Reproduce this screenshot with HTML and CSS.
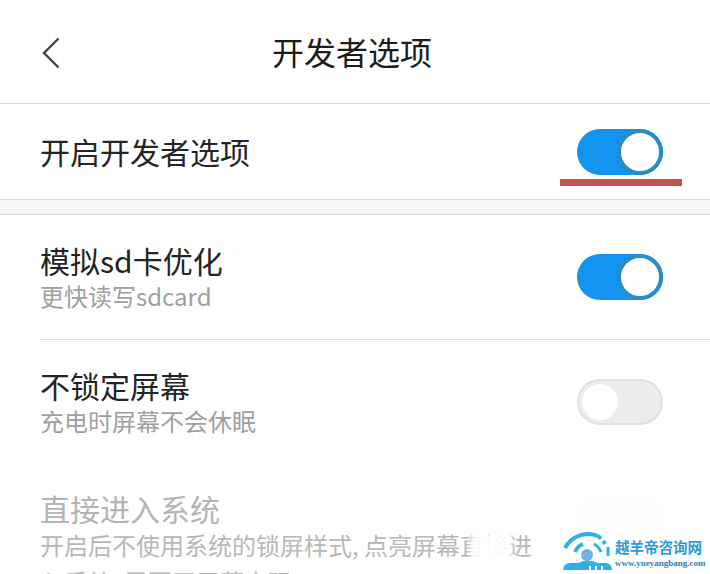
FILE: index.html
```html
<!DOCTYPE html>
<html lang="zh-CN">
<head>
<meta charset="UTF-8">
<meta name="viewport" content="width=device-width, initial-scale=1.0">
<title>开发者选项</title>
<link rel="stylesheet" href="styles.css">
</head>
<body>

<div class="page">
    <div class="header">
        <svg class="back" width="20" height="32" viewBox="0 0 20 32">
            <path d="M17.5 1.5 L3 16 L17.5 30.5" fill="none" stroke="#444" stroke-width="2.4"/>
        </svg>
        <div class="title">开发者选项</div>
    </div>

    <div class="row row-top">
        <div class="label">开启开发者选项</div>
        <div class="toggle on"><span class="knob"></span></div>
        <div class="red-line"></div>
    </div>

    <div class="section-gap"></div>

    <div class="row row-sub">
        <div class="text">
            <div class="label">模拟sd卡优化</div>
            <div class="sub">更快读写sdcard</div>
        </div>
        <div class="toggle on"><span class="knob"></span></div>
    </div>

    <div class="row row-sub">
        <div class="text">
            <div class="label">不锁定屏幕</div>
            <div class="sub">充电时屏幕不会休眠</div>
        </div>
        <div class="toggle off"><span class="knob"></span></div>
    </div>

    <div class="row row-last">
        <div class="text">
            <div class="label">直接进入系统</div>
            <div class="sub">开启后不使用系统的锁屏样式, 点亮屏幕直接进<br>入系统, 需要开屏幕密码</div>
        </div>
        <div class="toggle faint"></div>
    </div>

    <div class="smudge"></div>
    <div class="watermark">
        <svg width="52" height="40" viewBox="0 0 52 40">
            <path d="M3 16 A26 26 0 0 1 36 4" fill="none" stroke="#2db0ea" stroke-width="4"/>
            <path d="M36 4 A26 26 0 0 1 43 12" fill="none" stroke="#2db0ea" stroke-width="4" stroke-dasharray="4 3"/>
            <path d="M13 20 A15 15 0 0 1 21 12" fill="none" stroke="#2db0ea" stroke-width="4"/>
            <path d="M32 12 A15 15 0 0 1 39 20" fill="none" stroke="#2db0ea" stroke-width="3"/>
            <path d="M46 15 V24" fill="none" stroke="#2db0ea" stroke-width="3"/>
            <circle cx="25" cy="23" r="6" fill="#6fb0e6"/>
            <path d="M1 38 Q1 32 8 31 H16 Q25 26 36 31 H44 Q50 32 50 38 Z" fill="#2db0ea"/>
            <path d="M28 38 V34 M34 38 V34 M40 38 V34" stroke="#fff" stroke-width="2"/>
        </svg>
        <div class="wm-text">
            <div class="wm-name">越羊帝咨询网</div>
            <div class="wm-url">www.yueyangbang.com</div>
        </div>
    </div>
</div>

</body>
</html>
```

FILE: styles.css
```css
html, body {
    margin: 0;
    padding: 0;
    background: #fff;
}
.page {
    position: relative;
    width: 710px;
    height: 574px;
    overflow: hidden;
    font-family: "Noto Sans CJK SC", "Liberation Sans", sans-serif;
    color: #222;
}
.header {
    position: relative;
    height: 103px;
    border-bottom: 1px solid #d8d8d8;
    display: flex;
    align-items: center;
    justify-content: center;
}
.back {
    position: absolute;
    left: 41px;
    top: 37px;
}
.title {
    font-size: 32px;
    line-height: 40px;
    color: #1c1c1c;
    margin-top: -2px;
    margin-right: 6px;
}
.row {
    position: relative;
    display: flex;
    align-items: center;
    justify-content: space-between;
    padding-right: 47px;
    margin-left: 40px;
}
.row-top {
    height: 95px;
}
.row-sub {
    height: 125px;
    border-bottom: 1px solid #dedede;
    box-sizing: border-box;
}
.row-sub + .row-sub {
    border-bottom: 0;
    height: 123px;
}
.row-last {
    height: 125px;
    align-items: flex-start;
}
.label {
    font-size: 30px;
    line-height: 36px;
    color: #242424;
}
.row-top .label {
    margin-top: -2px;
}
.text {
    padding-top: 2px;
}
.sub {
    font-size: 24px;
    line-height: 36px;
    color: #a0a0a0;
}
.row-last .text {
    padding-top: 27px;
}
.row-last .label {
    color: #b4b4b4;
}
.row-last .sub {
    color: #b8b8b8;
    width: 510px;
    line-height: 37px;
}
.section-gap {
    height: 14px;
    background: #f6f6f6;
    border-top: 1px solid #dcdcdc;
    border-bottom: 1px solid #dcdcdc;
}
.toggle {
    position: relative;
    flex: none;
    width: 86px;
    height: 46px;
    border-radius: 23px;
    box-sizing: border-box;
}
.toggle.on {
    background: #1294f0;
}
.toggle.on .knob {
    position: absolute;
    right: 0;
    top: 0;
    width: 46px;
    height: 46px;
    box-sizing: border-box;
    border-radius: 50%;
    background: #fff;
    border: 4px solid #2b8cc0;
}
.toggle.off {
    background: #ececec;
    border: 2px solid #dfdfdf;
}
.toggle.off .knob {
    position: absolute;
    left: 3px;
    top: 3px;
    width: 36px;
    height: 36px;
    border-radius: 50%;
    background: #fff;
}
.toggle.faint {
    margin-top: 34px;
    background: #fdfdfd;
}
.red-line {
    position: absolute;
    right: 28px;
    top: 75px;
    width: 122px;
    height: 7px;
    background: #c4524a;
}
.smudge {
    position: absolute;
    left: 470px;
    top: 534px;
    width: 42px;
    height: 30px;
    background: rgba(255, 255, 255, 0.92);
    filter: blur(2px);
}
.watermark {
    position: absolute;
    left: 548px;
    top: 526px;
    width: 162px;
    height: 48px;
    padding: 6px 0 0 14px;
    box-sizing: border-box;
    background: #fff;
    display: flex;
    gap: 1px;
}
.wm-text {
    margin-top: 6px;
    white-space: nowrap;
}
.wm-name {
    font-size: 14.5px;
    line-height: 18px;
    font-weight: 700;
    color: #2a9ad8;
}
.wm-url {
    font-family: "Liberation Serif", serif;
    font-size: 9px;
    line-height: 10px;
    font-weight: 700;
    color: #2a7fb4;
    margin-top: 2px;
}
```
